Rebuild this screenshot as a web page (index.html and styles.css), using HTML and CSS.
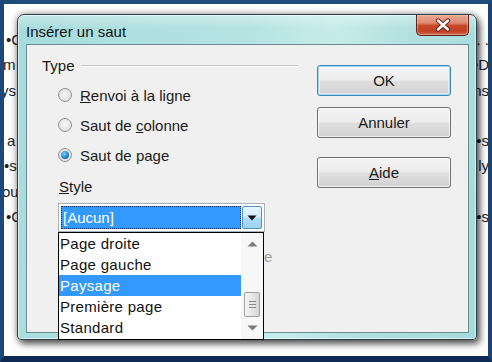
FILE: index.html
```html
<!DOCTYPE html>
<html lang="fr">
<head>
<meta charset="utf-8">
<title>Insérer un saut</title>
<link rel="stylesheet" href="styles.css">
</head>
<body>
<div class="screen">
  <div class="doc">
    <div class="line"><span class="l l1">•C</span><span class="r">. .</span></div>
    <div class="line"><span class="l l2">m</span><span class="r">•D</span></div>
    <div class="line"><span class="l l3">ys</span><span class="r">ns</span></div>
    <div class="line"><span class="l"></span><span class="r"></span></div>
    <div class="line"><span class="l l5">a</span><span class="r">•s</span></div>
    <div class="line"><span class="l l6">•s</span><span class="r">ly</span></div>
    <div class="line"><span class="l l7">ou</span><span class="r"></span></div>
    <div class="line"><span class="l l1">•C</span><span class="r">•s</span></div>
  </div>

  <div class="dialog">
    <div class="titlebar">
      <span class="title">Insérer un saut</span>
      <span class="close">
        <svg width="20" height="14" viewBox="0 0 20 14">
          <path d="M5 2.5 L15 11.5 M15 2.5 L5 11.5" stroke="#6a2618" stroke-width="4.4" stroke-linecap="round" fill="none"/>
          <path d="M5 2.5 L15 11.5 M15 2.5 L5 11.5" stroke="#ffffff" stroke-width="2.4" stroke-linecap="round" fill="none"/>
        </svg>
      </span>
    </div>
    <div class="client">
      <div class="left">
        <div class="group-head"><span>Type</span><span class="rule"></span></div>
        <div class="radios">
          <div class="radio"><span class="circle"></span><span><u>R</u>envoi à la ligne</span></div>
          <div class="radio"><span class="circle"></span><span>Saut de <u>c</u>olonne</span></div>
          <div class="radio"><span class="circle checked"></span><span>Saut de pa<u>g</u>e</span></div>
        </div>
        <div class="style-label"><u>S</u>tyle</div>
        <div class="combo-row">
          <div class="combo">
            <div class="field"><span class="field-text">[Aucun]</span></div>
            <div class="drop">
              <svg width="10" height="6" viewBox="0 0 10 6"><path d="M0.5 0.5 H9.5 L5 5.5 Z" fill="#111"/></svg>
            </div>
            <div class="popup">
              <div class="items">
                <div class="item">Page droite</div>
                <div class="item">Page gauche</div>
                <div class="item selected">Paysage</div>
                <div class="item">Première page</div>
                <div class="item">Standard</div>
              </div>
              <div class="scroll">
                <svg class="arrow" width="11" height="6" viewBox="0 0 11 6"><path d="M0.5 5.5 H10.5 L5.5 0.5 Z" fill="#7a7a7a"/></svg>
                <div class="track">
                  <div class="thumb"><span></span><span></span><span></span></div>
                </div>
                <svg class="arrow" width="11" height="6" viewBox="0 0 11 6"><path d="M0.5 0.5 H10.5 L5.5 5.5 Z" fill="#7a7a7a"/></svg>
              </div>
            </div>
          </div>
          <div class="hidden-label">e</div>
        </div>
      </div>
      <div class="buttons">
        <div class="btn default">OK</div>
        <div class="btn">Annuler</div>
        <div class="btn help"><u>A</u>ide</div>
      </div>
    </div>
  </div>
</div>
</body>
</html>
```

FILE: styles.css
```css
* { box-sizing: border-box; }

html, body {
  margin: 0;
  padding: 0;
  background: #0c2a54;
}

body {
  font-family: "Liberation Sans", Arial, sans-serif;
  font-size: 15px;
  color: #1a1a1a;
}

.screen {
  position: relative;
  width: 492px;
  height: 362px;
  background: #ffffff;
  border-style: solid;
  border-width: 4px 4px 6px 4px;
  border-color: #1e4b7a #1a4370 #0c2a54 #1d4878;
  overflow: hidden;
}

/* document behind the dialog */
.doc {
  padding-top: 23px;
  font-size: 15px;
  color: #1e1e1e;
}

.line {
  height: 25.3px;
  line-height: 25.3px;
  display: flex;
  justify-content: space-between;
  white-space: nowrap;
}

.l { margin-left: 2px; }
.l2 { margin-left: -1px; }
.l3 { margin-left: -3px; }
.l5 { margin-left: 3px; }
.l6 { margin-left: 0; }
.l7 { margin-left: -2px; }
.r { margin-right: -1px; }

/* dialog window */
.dialog {
  position: absolute;
  left: 13px;
  top: 10px;
  width: 460px;
  height: 326px;
  border: 1px solid #2e4046;
  border-radius: 7px 7px 4px 4px;
  padding: 0 7px 6px 8px;
  display: flex;
  flex-direction: column;
  background:
    linear-gradient(180deg, rgba(255,255,255,0.35) 0px, rgba(255,255,255,0) 14px),
    linear-gradient(100deg, #a7dcdc 0%, #b4e3e2 45%, #c6ecea 62%, #b0e0df 78%, #a6dbdb 100%);
  box-shadow: 3px 4px 7px rgba(0,0,0,0.6), 0 0 7px rgba(0,0,0,0.4), inset 0 0 0 1px rgba(255,255,255,0.55);
}

.titlebar {
  height: 29px;
  display: flex;
  align-items: flex-start;
  flex: none;
}

.title {
  margin-top: 8px;
  line-height: 17px;
  font-size: 15px;
  color: #111;
}

.close {
  margin-left: auto;
  width: 53px;
  height: 21px;
  display: flex;
  align-items: center;
  justify-content: center;
  border: 1px solid #5a2419;
  border-top: none;
  border-radius: 0 0 5px 5px;
  background: linear-gradient(180deg, #eaa894 0%, #dd8a72 40%, #c9492b 52%, #c24024 80%, #d0684c 100%);
  box-shadow: inset 0 0 0 1px rgba(255,210,190,0.45);
}

.client {
  flex: 1;
  display: flex;
  background: #f0f0f0;
  border: 1px solid #6a8c90;
}

.left {
  width: 271px;
  padding: 12px 0 0 15px;
}

.group-head {
  height: 18px;
  display: flex;
  align-items: center;
  line-height: 18px;
}

.rule {
  flex: 1;
  margin-left: 6px;
  margin-top: -2px;
  height: 1px;
  background: #c9c9c9;
  box-shadow: 0 1px 0 #ffffff;
}

.radios {
  margin-top: 5px;
  margin-left: 16px;
}

.radio {
  height: 30px;
  display: flex;
  align-items: center;
}

.circle {
  width: 14px;
  height: 14px;
  border-radius: 50%;
  border: 1px solid #8f9494;
  background: radial-gradient(circle at 50% 45%, #f7f7f7 0%, #e6e6e6 55%, #d2d2d2 100%);
  margin-right: 8px;
  display: flex;
  align-items: center;
  justify-content: center;
  flex: none;
}

.circle.checked::after {
  content: "";
  width: 8px;
  height: 8px;
  border-radius: 50%;
  background: radial-gradient(circle at 40% 35%, #8fd6ff 0%, #2a8fd6 45%, #0b4f8a 100%);
}

.style-label {
  margin-top: 8px;
  margin-left: 17px;
  height: 18px;
  line-height: 18px;
}

.combo-row {
  margin-top: 7px;
  margin-left: 16px;
  display: flex;
  align-items: flex-start;
}

.combo {
  position: relative;
  width: 207px;
  height: 29px;
  border: 1px solid #a9b1bb;
  padding: 2px;
  display: flex;
  background: #ffffff;
  flex: none;
}

.field {
  flex: 1;
  background: #3399ff;
  border: 1px dotted #0b2f66;
  color: #ffffff;
  display: flex;
  align-items: center;
  padding-left: 1px;
}

.field-text { line-height: 18px; }

.drop {
  width: 20px;
  margin-left: 1px;
  border: 1px solid #5d8fb8;
  border-radius: 2px;
  background: linear-gradient(180deg, #e6f5fd 0%, #d2ecfa 45%, #aedcf6 55%, #9ad2f2 100%);
  display: flex;
  align-items: center;
  justify-content: center;
}

.popup {
  position: absolute;
  left: -1px;
  top: 28px;
  width: 206px;
  height: 108px;
  border: 1px solid #000;
  background: #ffffff;
  display: flex;
  z-index: 2;
}

.items {
  width: 182px;
}

.item {
  height: 21px;
  line-height: 21px;
  padding-left: 1px;
  color: #111;
  letter-spacing: 0.3px;
  white-space: nowrap;
}

.item.selected {
  background: #3399ff;
  color: #ffffff;
}

.scroll {
  flex: 1;
  display: flex;
  flex-direction: column;
  align-items: center;
  padding: 8px 0 8px 0;
  background: #f7f7f7;
}

.track {
  flex: 1;
  width: 100%;
  display: flex;
  justify-content: center;
}

.thumb {
  margin-top: 45px;
  width: 16px;
  height: 25px;
  border: 1px solid #a0a0a0;
  border-radius: 2px;
  background: linear-gradient(90deg, #f4f4f4 0%, #e8e8e8 50%, #d6d6d6 100%);
  display: flex;
  flex-direction: column;
  align-items: center;
  justify-content: center;
  gap: 2px;
}

.thumb span {
  width: 7px;
  height: 1px;
  background: #8a8a8a;
}

.hidden-label {
  margin-top: 45px;
  margin-left: -1px;
  height: 18px;
  line-height: 18px;
  color: #9a9a9a;
}

.buttons {
  margin-left: 19px;
  padding-top: 20px;
  display: flex;
  flex-direction: column;
}

.btn {
  width: 134px;
  height: 31px;
  border: 1px solid #707070;
  border-radius: 3px;
  background: linear-gradient(180deg, #f4f4f4 0%, #ececec 48%, #dfdfdf 52%, #d2d2d2 100%);
  display: flex;
  align-items: center;
  justify-content: center;
  color: #1a1a1a;
  box-shadow: inset 0 0 0 1px rgba(255,255,255,0.7);
  margin-bottom: 11px;
}

.btn.default {
  border-color: #3c8dbc;
  box-shadow: inset 0 0 0 1px #9ed8f2, inset 0 0 0 2px rgba(255,255,255,0.5);
}

.btn.help {
  margin-top: 8px;
}
```
